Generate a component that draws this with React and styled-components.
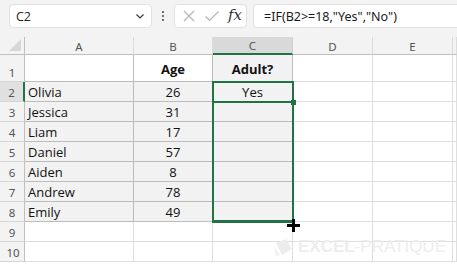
import React from "react";
import styled, { createGlobalStyle } from "styled-components";

const Global = createGlobalStyle`
  html, body { margin: 0; padding: 0; background: #ffffff; overflow: hidden; }
  * { box-sizing: border-box; }
`;

const GREEN = "#217346";

const Page = styled.div`
  width: 457px;
  height: 266px;
  position: relative;
  overflow: hidden;
  font-family: "Open Sans", "Noto Sans", sans-serif;
`;

const Toolbar = styled.div`
  height: 37px;
  background: #f3f3f3;
  display: flex;
  align-items: flex-start;
  padding: 4px 0 0 9px;
`;

const Box = styled.div`
  height: 24px;
  background: #ffffff;
  border: 1px solid #e2e2e2;
  border-radius: 4px;
  display: flex;
  align-items: center;
`;

const NameBox = styled(Box)`
  width: 143px;
  justify-content: space-between;
  padding: 0 6px 0 6px;
  font-size: 12.5px;
  color: #222;
`;

const Dots = styled.div`
  width: 22px;
  height: 24px;
  display: flex;
  flex-direction: column;
  align-items: center;
  justify-content: center;
  gap: 2px;
`;

const Dot = styled.span`
  width: 2px;
  height: 2px;
  background: #444;
  border-radius: 1px;
`;

const ButtonsBox = styled(Box)`
  width: 73px;
  padding: 0 4px 0 7px;
  justify-content: space-between;
`;

const Fx = styled.span`
  font-family: "DejaVu Serif", "Liberation Serif", serif;
  font-style: italic;
  font-size: 15px;
  color: #333;
  margin-top: -2px;
`;

const FormulaBox = styled(Box)`
  flex: 1;
  margin: 0 0 0 6px;
  border-right: none;
  border-radius: 4px 0 0 4px;
  padding-left: 10px;
  font-size: 12.5px;
  color: #1a1a1a;
  font-family: "Noto Sans", "Open Sans", sans-serif;
`;

const Sheet = styled.div`
  display: grid;
  grid-template-columns: 25px 109px 79px 80px 80px 80px 1fr;
  grid-template-rows: 18px 27px repeat(10, 20px);
  background: #ffffff;
`;

const ColHead = styled.div`
  background: ${(p) => (p.$sel ? "#d9d9d9" : "#f3f3f3")};
  border-right: 1px solid ${(p) => (p.$sel ? "#cfcfcf" : "#dcdcdc")};
  border-bottom: ${(p) => (p.$sel ? `2px solid ${GREEN}` : "1px solid #bfbfbf")};
  color: #555;
  font-family: "Noto Sans", sans-serif;
  font-size: 11.5px;
  display: flex;
  align-items: center;
  justify-content: center;
  padding-top: 1px;
`;

const Corner = styled.div`
  background: #f3f3f3;
  border-right: 1px solid #bfbfbf;
  border-bottom: 1px solid #bfbfbf;
  display: flex;
  align-items: flex-end;
  justify-content: flex-end;
  padding: 0 3px 3px 0;
`;

const RowHead = styled.div`
  background: ${(p) => (p.$sel ? "#e0e0e0" : "#f3f3f3")};
  border-right: ${(p) => (p.$sel ? `2px solid ${GREEN}` : "1px solid #bfbfbf")};
  border-bottom: 1px solid #d6d6d6;
  color: #555;
  font-family: "Noto Sans", sans-serif;
  font-size: 11.5px;
  display: flex;
  align-items: flex-end;
  justify-content: center;
  padding-bottom: 1px;
  padding-left: ${(p) => (p.$wide ? "2px" : "0")};
`;

const Cell = styled.div`
  background: ${(p) => (p.$fill ? "#f2f2f2" : "#ffffff")};
  border-right: 1px solid ${(p) => (p.$dark ? "#bcbcbc" : "#dedede")};
  border-bottom: 1px solid ${(p) => (p.$dark ? "#bcbcbc" : "#dedede")};
  font-family: "Open Sans", "Noto Sans", sans-serif;
  font-size: 13px;
  font-weight: ${(p) => (p.$bold ? 700 : 400)};
  color: #111;
  display: flex;
  align-items: center;
  justify-content: ${(p) => (p.$center ? "center" : "flex-start")};
  padding-left: ${(p) => (p.$center ? "0" : "3px")};
  padding-top: 1px;
  white-space: nowrap;
`;

const Selection = styled.div`
  position: absolute;
  left: 212px;
  top: 81px;
  width: 82px;
  height: 142px;
  border: 2px solid ${GREEN};
  border-bottom-width: 3px;
  pointer-events: none;
`;

const ActiveLine = styled.div`
  position: absolute;
  left: 212px;
  top: 101px;
  width: 82px;
  height: 2px;
  background: ${GREEN};
`;

const Handle = styled.div`
  position: absolute;
  left: 291px;
  top: 100px;
  width: 5px;
  height: 5px;
  background: ${GREEN};
`;

const Cursor = styled.div`
  position: absolute;
  left: 287px;
  top: 219px;
  width: 13px;
  height: 13px;
  &::before, &::after {
    content: "";
    position: absolute;
    background: #000;
  }
  &::before { left: 0; top: 5px; width: 13px; height: 3px; }
  &::after { left: 5px; top: 0; width: 3px; height: 13px; }
`;

const Watermark = styled.div`
  position: absolute;
  left: 272px;
  top: 237px;
  display: flex;
  align-items: center;
  gap: 4px;
  white-space: nowrap;
  font-family: "Liberation Sans", Arial, sans-serif;
  font-size: 17px;
  line-height: 20px;
  color: #ededed;
  pointer-events: none;
`;

const WBold = styled.span`
  font-weight: 700;
`;

const Chevron = () => (
  <svg width="10" height="10" viewBox="0 0 10 10">
    <path d="M1.5 3.5 L5 7 L8.5 3.5" fill="none" stroke="#333" strokeWidth="1.1" />
  </svg>
);

const XIcon = () => (
  <svg width="14" height="14" viewBox="0 0 14 14">
    <path d="M2 2 L12 12 M12 2 L2 12" stroke="#b5b5b5" strokeWidth="1.2" fill="none" />
  </svg>
);

const CheckIcon = () => (
  <svg width="16" height="14" viewBox="0 0 16 14">
    <path d="M1.5 7.5 L5.5 11.5 L14.5 2.5" stroke="#b5b5b5" strokeWidth="1.2" fill="none" />
  </svg>
);

const CornerTri = () => (
  <svg width="12" height="12" viewBox="0 0 12 12">
    <path d="M12 0 L12 12 L0 12 Z" fill="#d7d7d7" />
  </svg>
);

const Logo = () => (
  <svg width="22" height="20" viewBox="0 0 22 20">
    <path d="M4 6 L14 2 L20 12 L10 18 Z" fill="#ededed" />
    <path d="M2 10 L8 18 L4 19 Z" fill="#f0f0f0" />
  </svg>
);

const cols = ["A", "B", "C", "D", "E"];
const data = [
  ["Olivia", "26"],
  ["Jessica", "31"],
  ["Liam", "17"],
  ["Daniel", "57"],
  ["Aiden", "8"],
  ["Andrew", "78"],
  ["Emily", "49"],
];

export default function App() {
  const rows = [];
  for (let r = 1; r <= 10; r++) {
    const inTable = r <= 8;
    const d = r >= 2 && r <= 8 ? data[r - 2] : null;
    rows.push(
      <React.Fragment key={r}>
        <RowHead $sel={r === 2} $wide={r >= 10}>{r}</RowHead>
        <Cell $dark={inTable} $fill={r >= 2 && inTable}>
          {d ? d[0] : ""}
        </Cell>
        <Cell $dark={inTable} $fill={inTable && r >= 2} $center $bold={r === 1}>
          {r === 1 ? "Age" : d ? d[1] : ""}
        </Cell>
        <Cell $dark={inTable} $fill={inTable} $center $bold={r === 1}>
          {r === 1 ? "Adult?" : r === 2 ? "Yes" : ""}
        </Cell>
        <Cell />
        <Cell />
        <Cell />
      </React.Fragment>
    );
  }

  return (
    <Page>
      <Global />
      <Toolbar>
        <NameBox>
          <span>C2</span>
          <Chevron />
        </NameBox>
        <Dots>
          <Dot />
          <Dot />
          <Dot />
        </Dots>
        <ButtonsBox>
          <XIcon />
          <CheckIcon />
          <Fx>fx</Fx>
        </ButtonsBox>
        <FormulaBox>=IF(B2&gt;=18,"Yes","No")</FormulaBox>
      </Toolbar>
      <Sheet>
        <Corner>
          <CornerTri />
        </Corner>
        {cols.map((c) => (
          <ColHead key={c} $sel={c === "C"}>
            {c}
          </ColHead>
        ))}
        <ColHead />
        {rows}
      </Sheet>
      <Selection />
      <ActiveLine />
      <Handle />
      <Cursor />
      <Watermark>
        <Logo />
        <span>
          <WBold>EXCEL</WBold>-PRATIQUE
        </span>
      </Watermark>
    </Page>
  );
}
